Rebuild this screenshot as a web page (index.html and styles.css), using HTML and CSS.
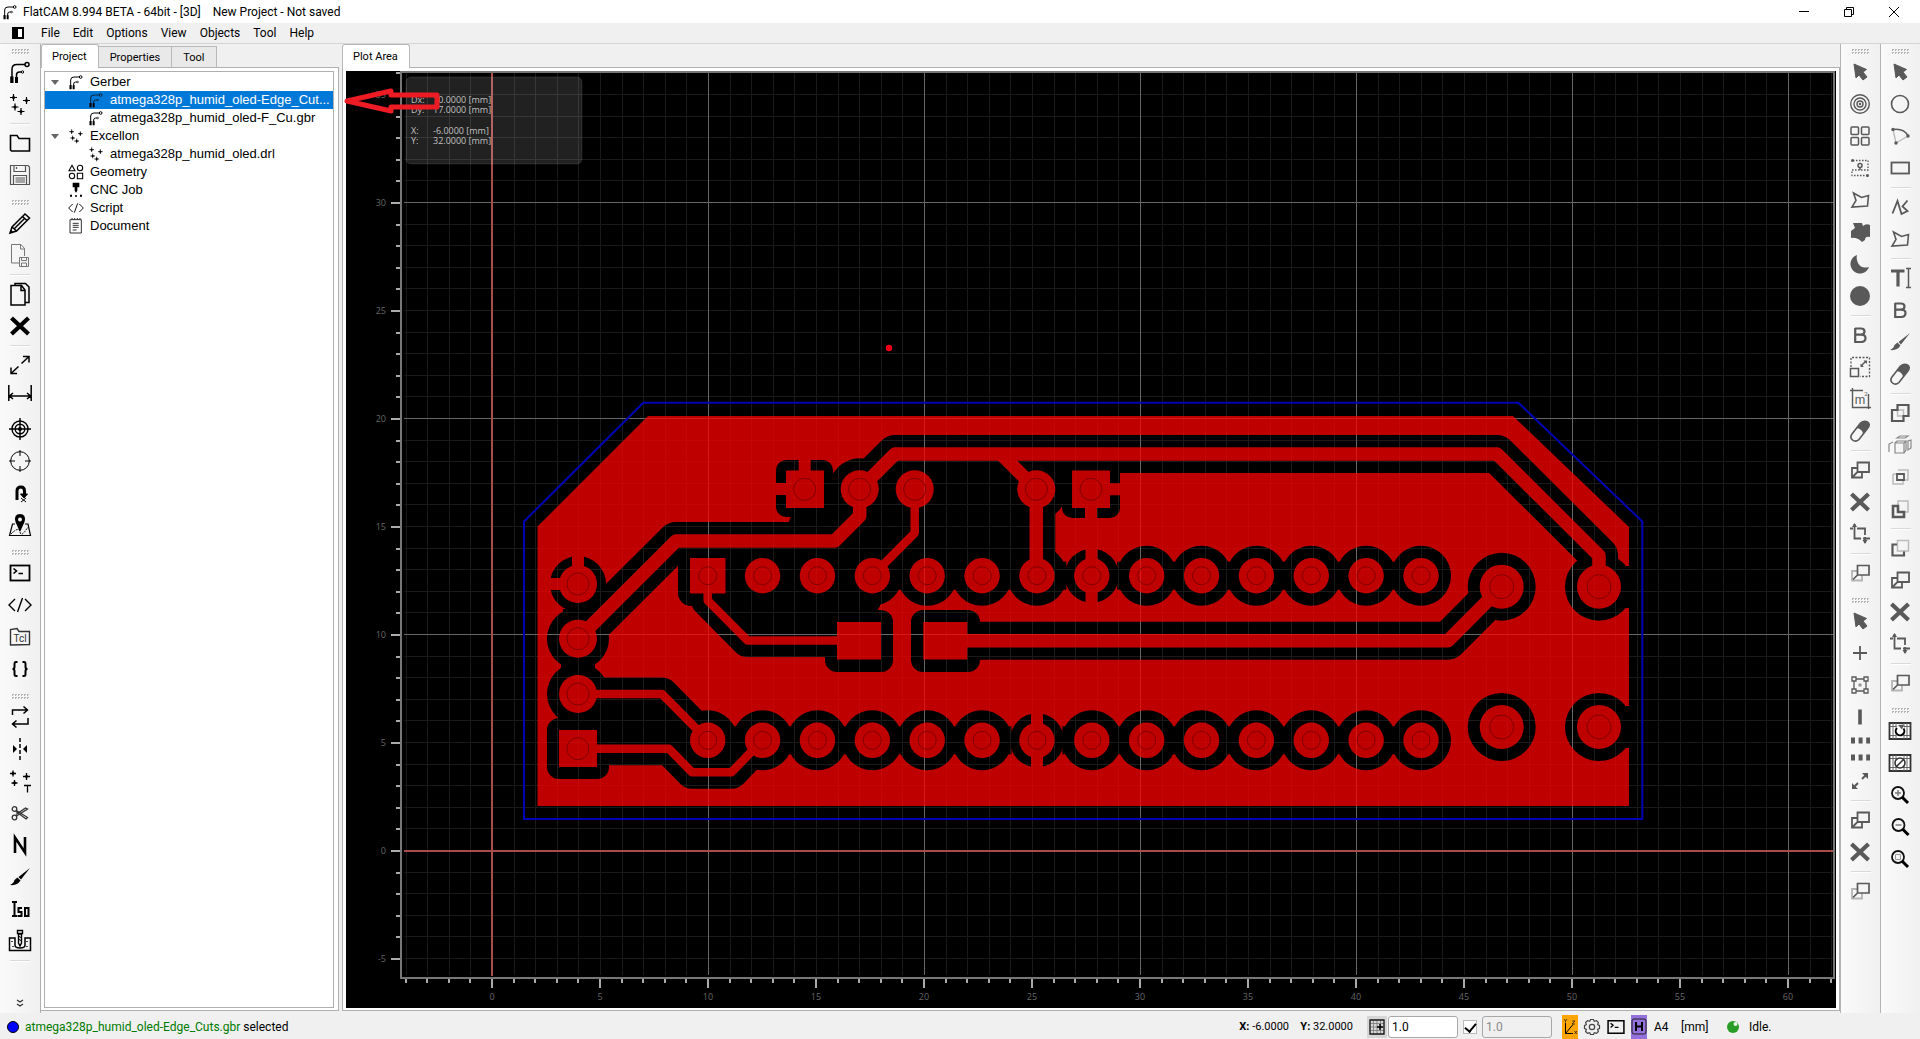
FILE: index.html
```html
<!DOCTYPE html>
<html lang="en">
<head>
<meta charset="utf-8">
<title>FlatCAM 8.994 BETA</title>
<link rel="stylesheet" href="styles.css">
</head>
<body>
<svg class="sprite" aria-hidden="true">
  <symbol id="route" viewBox="0 0 24 24"><path d="M4 17V9Q4 4.500 9 4.500H17M8.500 18V15Q8.500 12 11.500 12H13.500" fill="none" stroke="currentColor" stroke-width="1.500"/><path d="M2.200 16.500h3.300v6.500H2.200zM7 17h3v6H7z"/><circle cx="19" cy="4.500" r="2" fill="none" stroke="currentColor" stroke-width="1.500"/><circle cx="14.500" cy="12" r="1.200" fill="none" stroke="currentColor"/></symbol>
  <symbol id="drills" viewBox="0 0 24 24"><path d="M5.500 2v7M2 5.500h7M18.500 5v7M15 8.500h7M7 11.500v7M3.500 15h7M13 16v7M9.500 19.500h7" stroke="currentColor" stroke-width="1.200"/><g><circle cx="5.500" cy="5.500" r="1.500"/><circle cx="18.500" cy="8.500" r="1.500"/><circle cx="7" cy="15" r="1.500"/><circle cx="13" cy="19.500" r="1.500"/></g></symbol>
  <symbol id="folder" viewBox="0 0 24 24"><path d="M2.500 19V4.500H9l2 3H21.500V20H3.500z" fill="none" stroke="currentColor" stroke-width="1.600"/></symbol>
  <symbol id="save" viewBox="0 0 24 24"><path d="M2.500 2.500H20l1.500 1.500V21.500h-19zM6 2.500V8.500H17.500V2.500M5.500 21V12.500H18.500V21M7.500 15H17M7.500 17H17M7.500 19H17M8.500 4v2" fill="none" stroke="#555" stroke-width="1.200"/></symbol>
  <symbol id="pencil" viewBox="0 0 24 24"><path d="M2 22l2-6L17 3l4.500 4L8.500 20zM4 16l4.500 4M14.500 5.500l4.500 4M6.500 17.500L17 7" fill="none" stroke="currentColor" stroke-width="1.500"/><path d="M2 22l1.200-3 2 1.800z"/></symbol>
  <symbol id="filesave" viewBox="0 0 24 24"><path d="M11 20H3.500V1.500H13l3.500 4V13M12.500 1.500V6H17M11.500 14.500H20.500V23.500h-9zM13.500 14.500v3h5v-3M13.500 23v-3h5v3" fill="none" stroke="#777"/></symbol>
  <symbol id="copy" viewBox="0 0 24 24"><path d="M3 3.500H13.500L17 8V23H3zM13 4V8.500H17M7 3V1.500H17.500L21 5V20.500H17.500" fill="none" stroke="currentColor" stroke-width="1.500"/></symbol>
  <symbol id="cross" viewBox="0 0 24 24"><path d="M3.500 4L20.500 20M20.500 4L3.500 20" stroke="currentColor" stroke-width="4.200"/></symbol>
  <symbol id="expand" viewBox="0 0 24 24"><path d="M13.500 10.500L21 3.500M15 3.500H21V9.500M10.500 13.500L3 20.500M3 14.500V20.500H9" fill="none" stroke="currentColor" stroke-width="1.500"/></symbol>
  <symbol id="measure" viewBox="0 0 24 24"><path d="M.8 0V16M23.200 0V16M1 11H23M5 8L1.500 11 5 14M19 8l3.500 3-3.500 3" fill="none" stroke="currentColor" stroke-width="1.500"/></symbol>
  <symbol id="target" viewBox="0 0 24 24"><path d="M12 1V23M1 12H23" stroke="currentColor" stroke-width="1.400"/><g fill="none" stroke="currentColor" stroke-width="1.400"><circle cx="12" cy="12" r="8"/><circle cx="12" cy="12" r="4.800"/></g><circle cx="12" cy="12" r="2"/></symbol>
  <symbol id="crosshair" viewBox="0 0 24 24"><path d="M12 1V7M12 17V23M1 12H7M17 12H23" stroke="currentColor"/><circle cx="12" cy="12" r="9.300" fill="none" stroke="currentColor"/></symbol>
  <symbol id="hook" viewBox="0 0 24 24"><path d="M9 19V10Q9 6 13 6Q16.500 6 16.500 10V14" fill="none" stroke="currentColor" stroke-width="3"/><path d="M12.500 13h7l-3.500 4zM13 17l5 4M18 17l-5 4" stroke="currentColor"/></symbol>
  <symbol id="map" viewBox="0 0 24 24"><path d="M7 11H4.500L1.500 22.500H22.500L20 11H17" fill="none" stroke="currentColor" stroke-width="1.200"/><path d="M12 19L7.500 9Q5.500 1 12 1T16.500 9z"/><circle cx="12" cy="6.500" r="2" fill="#f5f5f5"/><path d="M3 21Q11 13 12 19T20 14" fill="none" stroke="currentColor" stroke-dasharray="2 1"/></symbol>
  <symbol id="shell" viewBox="0 0 24 24"><rect x="2.500" y="4.500" width="19" height="15" fill="none" stroke="currentColor" stroke-width="1.800"/><path d="M5.500 7.500l3 2.500-3 2.500M10.500 12.500H15" fill="none" stroke="currentColor" stroke-width="1.600"/></symbol>
  <symbol id="code" viewBox="0 0 24 24"><path d="M7 6L1 12l6 6M17 6l6 6-6 6M14.500 5L9.500 19" fill="none" stroke="currentColor" stroke-width="1.400"/></symbol>
  <symbol id="tcl" viewBox="0 0 24 24"><path d="M2.500 20V4.500L9 3.500l2 3H21.500V19.500z" fill="none" stroke="#333" stroke-width="1.400"/><text x="12" y="17" font-size="10" text-anchor="middle" fill="#333">Tcl</text></symbol>
  <symbol id="braces" viewBox="0 0 24 24"><path d="M9.500 5H8Q6.500 5 6.500 7V10Q6.500 12 4.500 12Q6.500 12 6.500 14V17Q6.500 19 8 19H9.500M14.500 5H16Q17.500 5 17.500 7V10Q17.500 12 19.500 12Q17.500 12 17.500 14V17Q17.500 19 16 19H14.500" fill="none" stroke="currentColor" stroke-width="2"/></symbol>
  <symbol id="loop" viewBox="0 0 24 24"><path d="M4.500 10V5H19M15.500 1.500L19.500 5 15.500 8.500M20 13V19H5M8.500 15.500L4.500 19l4 3.500" fill="none" stroke="currentColor" stroke-width="1.500"/></symbol>
  <symbol id="mirror" viewBox="0 0 24 24"><path d="M12 1V23" stroke="currentColor" stroke-width="1.500" stroke-dasharray="4 2"/><path d="M5 8v8l4-4zM19 8v8l-4-4z"/></symbol>
  <symbol id="drillsT" viewBox="0 0 24 24"><path d="M5 1.500v6M2 4.500h6M18.500 4v7M15 7.500h7M6.500 11v6M3.500 14h6M16 16.500H23M19.500 16.500V23.500" stroke="currentColor" stroke-width="1.300"/><circle cx="5" cy="4.500" r="1.400"/><circle cx="18.500" cy="7.500" r="1.400"/><circle cx="6.500" cy="14" r="1.400"/></symbol>
  <symbol id="scissors" viewBox="0 0 24 24"><g fill="none" stroke="#333" stroke-width="1.300"><circle cx="6.500" cy="8" r="2.300"/><circle cx="6.500" cy="16.500" r="2.300"/><path d="M8.500 9.500L19.500 16.500 18 18 8 10.500M8.500 15L19.500 8 17.500 7 8 13.500"/></g></symbol>
  <symbol id="ncc" viewBox="0 0 24 24"><path d="M7 20V4.500L17 19.500V4" fill="none" stroke="currentColor" stroke-width="2.600"/></symbol>
  <symbol id="brush" viewBox="0 0 24 24"><path d="M22 3L13 14.500l-2.500-2.500zM9.500 12.500l3 3Q9 21 2 20 6 18 6.500 15z" fill="currentColor"/></symbol>
  <symbol id="iso" viewBox="0 0 24 24"><path d="M4 5h5M6.500 5v14M4 19h5M14 11h-3.500v4h3v4h-4M17 11h3.500v8H17z" fill="none" stroke="currentColor" stroke-width="2"/></symbol>
  <symbol id="mill" viewBox="0 0 24 24"><path d="M7 9H1.500V21.500H22.500V9H17V16Q17 19 12 19T7 16z" fill="none" stroke="currentColor" stroke-width="1.500"/><path d="M9.500 1.500h5v3h-5zM10.500 5h3v9L12 17l-1.500-3zM4 12v1M19 12v1M5 17v1M19 17v1" fill="none" stroke="currentColor" stroke-width="1.400"/><path d="M10 7l4 2M10 10l4 2" stroke="currentColor"/></symbol>
  <symbol id="pointer" viewBox="0 0 24 24"><path d="M6 4l12.500 5.500-3.500 2.500 4 5-4 3-4-5-3 3z" fill="currentColor" stroke="currentColor"/></symbol>
  <symbol id="rings" viewBox="0 0 24 24"><g fill="none" stroke="currentColor" stroke-width="1.400"><circle cx="12" cy="12" r="9.300"/><circle cx="12" cy="12" r="6"/><circle cx="12" cy="12" r="3"/></g><circle cx="12" cy="12" r="1.200"/></symbol>
  <symbol id="array" viewBox="0 0 24 24"><g fill="none" stroke="currentColor" stroke-width="1.500"><rect x="3" y="3" width="7.500" height="7.500" rx="1"/><rect x="13.500" y="3" width="7.500" height="7.500" rx="1"/><rect x="3" y="13.500" width="7.500" height="7.500" rx="1"/><rect x="13.500" y="13.500" width="7.500" height="7.500" rx="1"/></g></symbol>
  <symbol id="track" viewBox="0 0 24 24"><path d="M5 4.500H20V14H4V19.500H19" fill="none" stroke="currentColor" stroke-dasharray="1.500 1.500" stroke-width="1.300"/><circle cx="4.500" cy="4.500" r="1.500"/><circle cx="19.500" cy="19.500" r="1.500"/><circle cx="12" cy="9.500" r="2" fill="none" stroke="currentColor" stroke-width="1.500"/><path d="M12 11v3" stroke="currentColor" stroke-width="1.500"/></symbol>
  <symbol id="poly" viewBox="0 0 24 24"><path d="M5.500 5L13.500 9.500 20.500 7.500 19.500 18 4 19 8 12.500z" fill="none" stroke="currentColor" stroke-width="1.600"/></symbol>
  <symbol id="blob" viewBox="0 0 24 24"><path d="M5 3H14L15 6Q18 3 22 5V17Q17 16 17 20L14 22Q9 17 3 18V11L7 8z" fill="currentColor"/></symbol>
  <symbol id="moon" viewBox="0 0 24 24"><path d="M9 3A9.500 9.500 0 1 0 21 15Q13 17 10 11 8 7 9 3z" fill="currentColor"/></symbol>
  <symbol id="disc" viewBox="0 0 24 24"><circle cx="12" cy="12" r="10" fill="currentColor"/></symbol>
  <symbol id="buffer" viewBox="0 0 24 24"><path d="M7 5.500H13Q16.500 5.500 16.500 8.500T13 11.700H7.500M13 11.700Q17.500 11.700 17.500 15.200T13 19H7.200V5" fill="none" stroke="currentColor" stroke-width="2.200"/></symbol>
  <symbol id="scale" viewBox="0 0 24 24"><path d="M3 12V2.500H21.500V21.500H12" fill="none" stroke="currentColor" stroke-dasharray="2 1.500" stroke-width="1.300"/><path d="M2.500 13.500h8v8h-8zM13.500 10.500l4-4" fill="none" stroke="currentColor" stroke-width="1.500"/><path d="M15.500 5.500H19V9zM12.500 8.500V12H16z"/></symbol>
  <symbol id="area" viewBox="0 0 24 24"><path d="M4.500 1V20.500H23M2 3.500H15M20.500 7V22" fill="none" stroke="currentColor" stroke-width="1.400"/><text x="12" y="17" font-size="12" text-anchor="middle" fill="currentColor">m</text><text x="18" y="9" font-size="6" text-anchor="middle" fill="currentColor">2</text></symbol>
  <symbol id="eraser" viewBox="0 0 24 24"><path d="M4 15L12.500 4Q16 1 19.500 3T19.500 9.500L11 20.500Q7.500 23.500 4.500 21T4 15z" fill="none" stroke="currentColor" stroke-width="1.600"/><path d="M8.500 9L12.500 4Q16 1 19.500 3T19.500 9.500L15 15.500Q15 10 8.500 9z" fill="currentColor"/></symbol>
  <symbol id="dup" viewBox="0 0 24 24"><path d="M9.500 4.500h11.500v9.500H9.500zM9.500 10H4v9.500H14V14M5 18.500l4-4" fill="none" stroke="currentColor" stroke-width="1.800"/></symbol>
  <symbol id="move" viewBox="0 0 24 24"><path d="M9.500 10H4v9.500H14V14" fill="none" stroke="#b5b5b5" stroke-width="1.800"/><path d="M9.500 4.500h11.500v9.500H9.500zM5 18.500l5-5" fill="none" stroke="currentColor" stroke-width="1.700"/></symbol>
  <symbol id="crop" viewBox="0 0 24 24"><path d="M6.500 2V16.500H13M2 6.500H5M9 6.500H17V13M15 16.500H22M17 15V21" fill="none" stroke="currentColor" stroke-width="1.800"/><path d="M4 5l2.500-4L9 5zM14.500 18h5L17 22z"/></symbol>
  <symbol id="plus" viewBox="0 0 24 24"><path d="M12 5V19M5 12H19" stroke="currentColor" stroke-width="1.800"/></symbol>
  <symbol id="nodes" viewBox="0 0 24 24"><g fill="none" stroke="currentColor" stroke-width="1.300"><path d="M4 4h4v4H4zM16 4h4v4h-4zM4 16h4v4H4zM16 16h4v4h-4zM8 6h8M8 18h8M6 8v8M18 8v8"/></g><circle cx="12" cy="12" r="1.800" fill="#999"/></symbol>
  <symbol id="bar" viewBox="0 0 24 24"><path d="M12 4.500V19.500" stroke="currentColor" stroke-width="3.600"/></symbol>
  <symbol id="dashes" viewBox="0 0 24 24"><path d="M3 3.500H22M3 20.500H22" stroke="currentColor" stroke-width="6" stroke-dasharray="4 3.600"/></symbol>
  <symbol id="spread" viewBox="0 0 24 24"><path d="M14 10l5-5M10 14l-5 5" stroke="currentColor" stroke-width="2"/><path d="M14 4h6v6zM4 14v6h6z" fill="currentColor"/></symbol>
  <symbol id="ring" viewBox="0 0 24 24"><circle cx="12" cy="12" r="8.500" fill="none" stroke="currentColor" stroke-width="1.600"/></symbol>
  <symbol id="arc" viewBox="0 0 24 24"><path d="M5 5.500L8 19 20 12" fill="none" stroke="#bbb" stroke-width="1.400"/><path d="M5 5.500Q16 4 20 12" fill="none" stroke="currentColor" stroke-width="1.500"/><circle cx="5" cy="5.500" r="1.700"/><circle cx="20" cy="12" r="1.700"/><circle cx="8" cy="19" r="1.700"/></symbol>
  <symbol id="box" viewBox="0 0 24 24"><rect x="3.500" y="6.500" width="17.500" height="11" fill="none" stroke="currentColor" stroke-width="1.800"/></symbol>
  <symbol id="path" viewBox="0 0 24 24"><path d="M4.500 18.500L9.500 6 13.500 19 19.500 16 14.500 11.500 19.500 5.500" fill="none" stroke="currentColor" stroke-width="1.800"/></symbol>
  <symbol id="text" viewBox="0 0 24 24"><path d="M3 5H16.500M10 4V20.500" fill="none" stroke="currentColor" stroke-width="3.200"/><path d="M18 2.500h5M20.500 3V21M18 21.500h5" stroke="currentColor" stroke-width="1.500"/></symbol>
  <symbol id="union" viewBox="0 0 24 24"><path d="M9.500 9h6v6h-6z" fill="none" stroke="#bbb" stroke-width="1.400"/><path d="M9.500 4H20.500V15H15.500V20H4V9H9.500z" fill="none" stroke="currentColor" stroke-width="2.200"/></symbol>
  <symbol id="cubes" viewBox="0 0 24 24"><g fill="none" stroke="#888" stroke-width="1.200"><path d="M7 10h9v10H7zM7 10l2-2h9l-2 2M18 8v9l-2 3M9 5l3-2h8l-3 2zM1 19V11l4-2M23 7l-3 1v9l3-2z"/></g></symbol>
  <symbol id="inter" viewBox="0 0 24 24"><path d="M10 5h10v10h-5M5 9h5M5 9v10h10v-4" fill="none" stroke="#bbb" stroke-width="1.500"/><path d="M9 9h7v6H9z" fill="none" stroke="currentColor" stroke-width="1.800"/></symbol>
  <symbol id="cutaway" viewBox="0 0 24 24"><path d="M10 8V4h10v11h-4" fill="none" stroke="#bbb" stroke-width="1.500"/><path d="M5 9h5v6h6v5H5z" fill="none" stroke="currentColor" stroke-width="2.600"/></symbol>
  <symbol id="subtract" viewBox="0 0 24 24"><path d="M9.500 4.500h11V15h-11z" fill="none" stroke="#bbb" stroke-width="1.500"/><path d="M9 8.500H4.500V19.500H16V15.500" fill="none" stroke="currentColor" stroke-width="2.200"/></symbol>
  <symbol id="replot" viewBox="0 0 24 24"><path d="M1.500 4h21v16h-21z" fill="#fff" stroke="#333" stroke-width="1.800"/><path d="M5 4v16M8 4v16M16 4v16M19 4v16M2 7.500h20M2 16.500h20" stroke="#666"/><circle cx="12" cy="12" r="5.500" fill="#fff"/><path d="M9 9A4.300 4.300 0 1 0 15.500 9.500" fill="none" stroke="#000" stroke-width="2"/><path d="M10 6l6-.5-2 5z"/></symbol>
  <symbol id="clear" viewBox="0 0 24 24"><path d="M1.500 4h21v16h-21z" fill="#fff" stroke="#333" stroke-width="1.800"/><path d="M5 4v16M8 4v16M16 4v16M19 4v16M2 7.500h20M2 16.500h20" stroke="#666"/><circle cx="12" cy="12" r="5" fill="#fff" stroke="#333" stroke-width="1.600"/><path d="M8.500 15.500l7-7" stroke="#333" stroke-width="1.500"/></symbol>
  <symbol id="zin" viewBox="0 0 24 24"><circle cx="10" cy="10" r="6" fill="none" stroke="#111" stroke-width="1.800"/><path d="M14 14l6 6" stroke="#000" stroke-width="3"/><path d="M7 10h6M10 7v6" stroke="#777" stroke-width="1.400"/></symbol>
  <symbol id="zout" viewBox="0 0 24 24"><circle cx="10.500" cy="10" r="6" fill="none" stroke="#111" stroke-width="1.800"/><path d="M14.500 14l6 6" stroke="#000" stroke-width="3"/><path d="M7.500 10h6" stroke="#777" stroke-width="1.400"/></symbol>
  <symbol id="zfit" viewBox="0 0 24 24"><circle cx="10" cy="10" r="6" fill="none" stroke="#111" stroke-width="1.800"/><path d="M14 14l6 6" stroke="#000" stroke-width="3"/><path d="M7.500 7.500h5v5h-5z" fill="none" stroke="#999"/></symbol>
  <symbol id="shapes" viewBox="0 0 24 24"><g fill="none" stroke="currentColor" stroke-width="1.600"><path d="M6 2l4.500 8h-9zM14 14h8v8h-8z"/><circle cx="18" cy="6" r="4"/><circle cx="6" cy="18" r="4"/></g></symbol>
  <symbol id="cnc" viewBox="0 0 24 24"><path d="M7 1h10v7h-3v5l-2 3-2-3V8H7zM3 19h3v3H3zM10.500 20h3v2h-3zM18 19h3v3h-3z"/></symbol>
  <symbol id="doc" viewBox="0 0 24 24"><path d="M3 2.500h17v20H3zM7 8h9M7 11h9M7 14h9M7 18h6M6 0v3M10 0v3M14 0v3M18 0v3" fill="none" stroke="#333" stroke-width="1.500"/></symbol>
  <symbol id="gear" viewBox="0 0 24 24"><circle cx="12" cy="12" r="3.600" fill="none" stroke="#444" stroke-width="1.600"/><path d="M10 2h4l1 2.500 3-1 2.500 2.500-1 3L22 10v4l-2.500 1 1 3-2.500 2.500-3-1L14 22h-4l-1-2.500-3 1L3.500 18l1-3L2 14v-4l2.500-1-1-3L6 3.500l3 1z" fill="none" stroke="#444" stroke-width="1.600"/></symbol>
</svg>

<div class="window">
  <header class="titlebar">
    <svg class="icon16"><use href="#route"/></svg>
    <h1 class="title">FlatCAM 8.994 BETA - 64bit - [3D] &nbsp;&nbsp; New Project - Not saved</h1>
    <div class="controls">
      <button aria-label="Minimize"><svg width="12" height="12"><path d="M1 5.500H11" stroke="#000"/></svg></button>
      <button aria-label="Restore"><svg width="12" height="12"><path d="M1.500 3.500h7v7h-7zM3.500 3V1.500h7v7H9" fill="none" stroke="#000"/></svg></button>
      <button aria-label="Close"><svg width="12" height="12"><path d="M1 1l10 10M11 1L1 11" stroke="#000"/></svg></button>
    </div>
  </header>

  <nav class="menubar">
    <button class="toggle" aria-label="Toggle panels"><svg width="12" height="12"><path d="M1 1h10v10H1z" fill="#fff" stroke="#000" stroke-width="2"/><path d="M1 1h5v10H1z"/></svg></button>
    <button>File</button><button>Edit</button><button>Options</button><button>View</button><button>Objects</button><button>Tool</button><button>Help</button>
  </nav>

  <main class="main">
    <div class="toolbar toolbar-main">
      <div class="group"><i class="handle"></i>
        <button aria-label="Open Gerber"><svg><use href="#route"/></svg></button>
        <button aria-label="Open Excellon"><svg><use href="#drills"/></svg></button><hr>
        <button aria-label="Open project"><svg><use href="#folder"/></svg></button>
        <button aria-label="Save project"><svg><use href="#save"/></svg></button></div>
      <div class="group"><i class="handle"></i>
        <button aria-label="Editor"><svg><use href="#pencil"/></svg></button>
        <button aria-label="Save object"><svg><use href="#filesave"/></svg></button><hr>
        <button aria-label="Copy"><svg><use href="#copy"/></svg></button>
        <button aria-label="Delete"><svg><use href="#cross"/></svg></button><hr>
        <button aria-label="Distance"><svg><use href="#expand"/></svg></button>
        <button aria-label="Minimum distance"><svg><use href="#measure"/></svg></button>
        <button aria-label="Set origin"><svg><use href="#target"/></svg></button>
        <button aria-label="Move to origin"><svg><use href="#crosshair"/></svg></button>
        <button aria-label="Jump to"><svg><use href="#hook"/></svg></button>
        <button aria-label="Locate"><svg><use href="#map"/></svg></button></div>
      <div class="group"><i class="handle"></i>
        <button aria-label="Shell"><svg><use href="#shell"/></svg></button>
        <button aria-label="New script"><svg><use href="#code"/></svg></button>
        <button aria-label="Open script"><svg><use href="#tcl"/></svg></button>
        <button aria-label="Run script"><svg><use href="#braces"/></svg></button></div>
      <div class="group"><i class="handle"></i>
        <button aria-label="Two-sided"><svg><use href="#loop"/></svg></button>
        <button aria-label="Align"><svg><use href="#mirror"/></svg></button>
        <button aria-label="Extract drills"><svg><use href="#drillsT"/></svg></button>
        <button aria-label="Cutout"><svg><use href="#scissors"/></svg></button>
        <button aria-label="Copper clear"><svg><use href="#ncc"/></svg></button>
        <button aria-label="Paint"><svg><use href="#brush"/></svg></button>
        <button aria-label="Isolation"><svg><use href="#iso"/></svg></button>
        <button aria-label="Drilling"><svg><use href="#mill"/></svg></button><hr></div>
      <button class="more" aria-label="More tools"><svg><path d="M9 8l3 2 3-2M9 12l3 2 3-2" fill="none" stroke="#333" stroke-width="1.300"/></svg></button>
    </div>

    <section class="side">
      <div class="tabs"><button class="tab active">Project</button><button class="tab">Properties</button><button class="tab">Tool</button></div>
      <div class="pane">
        <ul class="tree">
          <li><i class="caret"></i><svg class="icon16"><use href="#route"/></svg><span>Gerber</span></li>
          <li class="child selected"><svg class="icon16"><use href="#route"/></svg><span>atmega328p_humid_oled-Edge_Cut...</span></li>
          <li class="child"><svg class="icon16"><use href="#route"/></svg><span>atmega328p_humid_oled-F_Cu.gbr</span></li>
          <li><i class="caret"></i><svg class="icon16"><use href="#drills"/></svg><span>Excellon</span></li>
          <li class="child"><svg class="icon16"><use href="#drills"/></svg><span>atmega328p_humid_oled.drl</span></li>
          <li><svg class="icon16"><use href="#shapes"/></svg><span>Geometry</span></li>
          <li><svg class="icon16"><use href="#cnc"/></svg><span>CNC Job</span></li>
          <li><svg class="icon16"><use href="#code"/></svg><span>Script</span></li>
          <li><svg class="icon16"><use href="#doc"/></svg><span>Document</span></li>
        </ul>
      </div>
    </section>

    <section class="plot">
      <div class="tabs"><button class="tab active">Plot Area</button></div>
      <div class="pane">
        <svg class="canvas" id="canvas">
          <g id="grid"></g>
          <rect class="hud" x="60" y="6" width="176" height="87" rx="5"/>
          <g class="hud-text">
            <text x="65" y="32">Dx:</text><text x="87" y="32">10.0000 [mm]</text>
            <text x="65" y="42">Dy:</text><text x="87" y="42">17.0000 [mm]</text>
            <text x="65" y="63">X:</text><text x="87" y="63">-6.0000 [mm]</text>
            <text x="65" y="73">Y:</text><text x="87" y="73">32.0000 [mm]</text>
          </g>
          <defs>
            <g id="wide"><path d="M578 638.700L676 541H834.700L859.700 516V489.300L895 454H1497L1599 555.500V586.700M1001 454L1036.300 489.300V575.700M945 640.700H1448L1501.700 586.700"/></g>
            <g id="narrow"><path d="M914.700 489.300V533L872.300 575.700M707.700 575.700V600.500L747.500 640.600H859M578 694H662L707.700 740.300M578 748.700H669L692 772.300H731.500L762.300 740.300"/></g>
            <mask id="copper" maskUnits="userSpaceOnUse" x="500" y="380" width="1200" height="460">
              <path d="M537.500 526.500L648 416H1513L1629 527V806H537.500z" fill="#fff"/>
              <g fill="none" stroke="#000" stroke-linejoin="round" stroke-linecap="round">
                <use href="#wide" stroke-width="38"/><use href="#narrow" stroke-width="33"/>
              </g>
              <path d="M684 566L700 541H834L862 485L895 454H1036V576H684zM690 576H880V606L860 640H747zM1036 454H1091V489H1036zM804 480H860V530H786zM590 694H662L707 740H762L731 772H692L669 748H590zM1623 566H1632V608H1623zM1623 706H1632V748H1623zM561 664H595V669H561zM563 609H580V613H563z"/>
              <rect x="547" y="718" width="62" height="61" rx="12"/><rect x="776" y="460" width="57" height="57" rx="10"/><rect x="1062" y="461" width="58" height="57" rx="10"/><rect x="678" y="546" width="60" height="60" rx="13"/>
              <rect x="825" y="610" width="68" height="62" rx="12"/><rect x="911" y="610" width="69" height="62" rx="12"/>
              <g id="gaps"></g>
              <g fill="none" stroke="#fff" stroke-linejoin="round"><use href="#wide" stroke-width="13.500"/><use href="#narrow" stroke-width="8.500"/></g>
              <path d="M559 730h38v37h-38zM786 470.500h38v37.500h-38zM1072 470.500h38v37.500h-38zM690 558h35.500v35.500H690zM837 622h44v37.500h-44zM923.300 622h44v37.500h-44z" fill="#fff"/>
              <path d="M804.700 455V489H774M1091 489.300H1124M1091 489V522M1091.500 545V606M1037 709V771M578 554V584H548" fill="none" stroke="#fff" stroke-width="12"/>
              <g id="pads" fill="#fff"></g>
            </mask>
          </defs>
          <g id="board" transform="translate(-346 -71)">
            <rect x="500" y="380" width="1200" height="460" fill="#f00" opacity=".75" mask="url(#copper)"/>
            <g id="holes"></g>
            <path class="edge" d="M524 521.500L643.300 402.700H1518.300L1642.300 521.500V819H524z"/>
            <circle cx="889" cy="348" r="3.200" fill="#f00018"/>
          </g>
          <path class="arrow" d="M1 30L45 20V24H91V36H45V40z"/>
        </svg>
      </div>
    </section>

    <div class="toolbar toolbar-edit">
      <div class="group"><i class="handle"></i>
        <button aria-label="Select"><svg><use href="#pointer"/></svg></button>
        <button aria-label="Pad"><svg><use href="#rings"/></svg></button>
        <button aria-label="Pad array"><svg><use href="#array"/></svg></button>
        <button aria-label="Track"><svg><use href="#track"/></svg></button>
        <button aria-label="Region"><svg><use href="#poly"/></svg></button>
        <button aria-label="Poligonize"><svg><use href="#blob"/></svg></button>
        <button aria-label="Semidisc"><svg><use href="#moon"/></svg></button>
        <button aria-label="Disc"><svg><use href="#disc"/></svg></button><hr>
        <button aria-label="Buffer"><svg><use href="#buffer"/></svg></button>
        <button aria-label="Scale"><svg><use href="#scale"/></svg></button>
        <button aria-label="Mark area"><svg><use href="#area"/></svg></button>
        <button aria-label="Eraser"><svg><use href="#eraser"/></svg></button><hr>
        <button aria-label="Copy shape"><svg><use href="#dup"/></svg></button>
        <button aria-label="Delete shape"><svg><use href="#cross"/></svg></button>
        <button aria-label="Transform"><svg><use href="#crop"/></svg></button><hr>
        <button aria-label="Move shape"><svg><use href="#move"/></svg></button></div>
      <div class="group"><i class="handle"></i>
        <button aria-label="Select drill"><svg><use href="#pointer"/></svg></button>
        <button aria-label="Add drill"><svg><use href="#plus"/></svg></button>
        <button aria-label="Drill array"><svg><use href="#nodes"/></svg></button>
        <button aria-label="Add slot"><svg><use href="#bar"/></svg></button>
        <button aria-label="Slot array"><svg><use href="#dashes"/></svg></button>
        <button aria-label="Resize"><svg><use href="#spread"/></svg></button><hr>
        <button aria-label="Copy drill"><svg><use href="#dup"/></svg></button>
        <button aria-label="Delete drill"><svg><use href="#cross"/></svg></button><hr>
        <button aria-label="Move drill"><svg><use href="#move"/></svg></button></div>
    </div>

    <div class="toolbar toolbar-edit">
      <div class="group"><i class="handle"></i>
        <button aria-label="Select geometry"><svg><use href="#pointer"/></svg></button>
        <button aria-label="Circle"><svg><use href="#ring"/></svg></button>
        <button aria-label="Arc"><svg><use href="#arc"/></svg></button>
        <button aria-label="Rectangle"><svg><use href="#box"/></svg></button><hr>
        <button aria-label="Path"><svg><use href="#path"/></svg></button>
        <button aria-label="Polygon"><svg><use href="#poly"/></svg></button><hr>
        <button aria-label="Text"><svg><use href="#text"/></svg></button>
        <button aria-label="Buffer geometry"><svg><use href="#buffer"/></svg></button>
        <button aria-label="Paint shape"><svg><use href="#brush"/></svg></button>
        <button aria-label="Erase"><svg><use href="#eraser"/></svg></button><hr>
        <button aria-label="Union"><svg><use href="#union"/></svg></button>
        <button aria-label="Explode"><svg><use href="#cubes"/></svg></button>
        <button aria-label="Intersection"><svg><use href="#inter"/></svg></button>
        <button aria-label="Subtraction"><svg><use href="#cutaway"/></svg></button><hr>
        <button aria-label="Cut path"><svg><use href="#subtract"/></svg></button>
        <button aria-label="Copy geometry"><svg><use href="#dup"/></svg></button>
        <button aria-label="Delete geometry"><svg><use href="#cross"/></svg></button>
        <button aria-label="Transformations"><svg><use href="#crop"/></svg></button><hr>
        <button aria-label="Move geometry"><svg><use href="#move"/></svg></button></div>
      <div class="group"><i class="handle"></i>
        <button aria-label="Replot"><svg><use href="#replot"/></svg></button>
        <button aria-label="Clear plot"><svg><use href="#clear"/></svg></button>
        <button aria-label="Zoom in"><svg><use href="#zin"/></svg></button>
        <button aria-label="Zoom out"><svg><use href="#zout"/></svg></button>
        <button aria-label="Zoom fit"><svg><use href="#zfit"/></svg></button></div>
    </div>
  </main>

  <footer class="status">
    <i class="led"></i>
    <p class="message"><span class="file">atmega328p_humid_oled-Edge_Cuts.gbr</span> selected</p>
    <p class="coord"><b>X:</b> -6.0000</p>
    <p class="coord"><b>Y:</b> 32.0000</p>
    <button class="snap" aria-label="Snap to grid"><svg width="16" height="16"><path d="M1 1h14v14H1zM4.500 1v14M8 1v14M11.500 1v14M1 4.500h14M1 8h14M1 11.500h14" fill="none" stroke="#777" stroke-width=".8"/><path d="M1 1h14v14H1z" fill="none" stroke="#222" stroke-width="1.300"/><path d="M11 5v6M8 8h6" stroke="#000" stroke-width="1.500"/></svg></button>
    <input class="field" aria-label="Grid X" value="1.0">
    <input class="check" type="checkbox" aria-label="Link grid" checked>
    <input class="field" aria-label="Grid Y" value="1.0" disabled>
    <button class="axis" aria-label="Toggle axis"><svg width="16" height="24"><path d="M3.500 8V18.500H11M3.500 18.500L11 9.500" fill="none" stroke="#000"/><path d="M2 4l1.500 2L5 4M3.500 6v1.500M10 6h3l-3 3h3M12.500 16l2.500 3M15 16l-2.500 3" fill="none" stroke="#222" stroke-width=".8"/></svg></button>
    <button class="flat" aria-label="Preferences"><svg width="18" height="18"><use href="#gear"/></svg></button>
    <button class="flat" aria-label="Command line"><svg width="20" height="20"><use href="#shell"/></svg></button>
    <button class="hudbtn" aria-label="Toggle HUD"><svg width="16" height="24"><rect x="1" y="4" width="14" height="15" rx="2" fill="none" stroke="#222"/><path d="M5 7v9M11 7v9M5 11.500h6" stroke="#000" stroke-width="2"/></svg></button>
    <span class="paper">A4</span><span class="units">[mm]</span>
    <svg class="ball" width="14" height="14"><circle cx="7" cy="7" r="6" fill="#2a9d27"/><circle cx="9.500" cy="4" r="2" fill="#e5f5e5"/></svg>
    <span class="idle">Idle.</span>
  </footer>
</div>
<script src="plot.js"></script>
</body>
</html>
```
FILE: styles.css
```css
* { box-sizing: border-box; }
body { margin: 0; font: 12px/16px Roboto, "Open Sans", sans-serif; color: #000; background: #f0f0f0; }
button { font: inherit; color: inherit; background: none; border: 0; padding: 0; }
p, h1, ul { margin: 0; padding: 0; }
.sprite { display: none; }
.window { display: flex; flex-direction: column; height: 100vh; }
.icon16 { width: 16px; height: 16px; flex: none; }

.titlebar { display: flex; align-items: center; height: 23px; padding-left: 2px; background: #fff; }
.title { flex: 1; margin-left: 5px; font-size: 12px; font-weight: 400; }
.controls { display: flex; padding-right: 4px; }
.controls button { width: 45px; height: 23px; }
.controls svg { display: block; margin: 0 auto; }

.menubar { display: flex; align-items: center; gap: 13px; height: 21px; padding-left: 12px; border-bottom: 1px solid #d4d4d4; }
.menubar svg { display: block; }
.toggle { margin-right: 4px; }

.main { display: flex; flex: 1; min-height: 0; }
.toolbar { flex: none; display: flex; flex-direction: column; background: linear-gradient(to right, #fafafa, #f0f0f0); }
.toolbar-main { width: 41px; border-right: 1px solid #b0b0b0; overflow: hidden; }
.toolbar-edit { width: 40px; border-left: 1px solid #b4b4b4; color: #595959; fill: #595959; }
.group { display: flex; flex-direction: column; margin-bottom: 4px; }
.toolbar button { display: flex; align-items: center; justify-content: center; width: 40px; height: 32px; }
.toolbar .group button { flex: none; }
.toolbar-edit button { width: 38px; }
.toolbar button svg { width: 24px; height: 24px; }
.toolbar hr { width: 20px; height: 2px; margin: 3px auto 2px; border: 0; background: #d9d9d9; border-bottom: 1px solid #fff; }
.handle { width: 17px; height: 6px; margin: 4px auto 2px; background: conic-gradient(#b4b4b4 25%, transparent 0) -1px 1px / 3px 3px; }
.toolbar .more { margin-top: auto; height: 18px; }

.tabs { display: flex; align-items: flex-end; height: 23px; }
.tab { height: 21px; padding: 1px 11px 0; font-size: 11px; border: 1px solid #b9b9b9; border-bottom: 0; border-left-width: 0; background: #e9e9e9; }
.tab.active { height: 24px; padding: 0 11px 0 10px; border-left-width: 1px; border-radius: 3px 3px 0 0; background: #fff; position: relative; z-index: 1; margin-bottom: -1px; }
.side { flex: none; display: flex; flex-direction: column; width: 298px; padding-bottom: 2px; }
.pane { flex: 1; min-height: 0; border: 1px solid #b0b0b0; background: #fff; padding: 3px; }
.tree { height: 100%; padding-top: 1px; border: 1px solid #b0b0b0; list-style: none; font: 13px/18px "Liberation Sans", Arial, sans-serif; }
.side .pane { border-left: 0; padding: 3px 4px 2px 3px; }
.tree li { display: flex; align-items: center; height: 18px; padding-left: 23px; white-space: nowrap; position: relative; }
.tree li.child { padding-left: 43px; }
.tree li span { margin-left: 6px; }
.tree .selected { background: #0078d7; color: #fff; }
.tree .selected svg { color: #123; }
.caret { position: absolute; left: 6px; top: 7px; border: 4px solid transparent; border-top: 5px solid #666; border-bottom: 0; }

.plot { flex: 1; min-width: 0; display: flex; flex-direction: column; padding: 0 0 2px 3px; }
.plot .pane { padding: 3px 3px 2px; }
.canvas { display: block; width: 100%; height: 100%; background: #000; overflow: visible; }
.hud { fill: #fff; fill-opacity: .13; stroke: #fff; stroke-opacity: .1; }
.hud-text { font: 9px "Open Sans", sans-serif; fill: #c0c0c0; }
.minor { stroke: #1a1a1a; fill: none; }
.major { stroke: #666; fill: none; }
.frame { stroke: #777; stroke-width: 2; fill: none; }
.origin { stroke: #a84c4c; stroke-width: 2; fill: none; }
.ticks { stroke: #aaa; stroke-width: 2; fill: none; }
.label { font: 9px "Open Sans", sans-serif; fill: #666; }
.hole { fill: none; stroke: #800000; stroke-width: 1; }
.edge { fill: none; stroke: #0000b4; stroke-width: 2; }
.arrow { fill: none; stroke: #ed1c24; stroke-width: 5; stroke-linejoin: round; }

.status { display: flex; align-items: center; height: 26px; padding: 2px 0 0 7px; }
.led { width: 12px; height: 12px; border: 1px solid #000; border-radius: 50%; background: #00f; }
.message { flex: 1; margin-left: 6px; }
.file { color: #007a00; }
.coord { min-width: 52px; margin-right: 9px; font-size: 11px; }
.snap { display: flex; align-items: center; justify-content: center; width: 20px; height: 22px; margin: 0 1px 0 5px; background: #d6d6d6; }
.field { width: 70px; height: 22px; padding: 0 3px; font: inherit; border: 1px solid #a8a8a8; border-radius: 3px; background: #fff; }
.field:disabled { color: #888; background: #f0f0f0; }
.check { appearance: none; width: 14px; height: 14px; margin: 0 5px; border: 1px solid #bbb; background: #fff; display: grid; place-items: center; }
.check:checked::before { content: ""; width: 5px; height: 9px; margin-bottom: 2px; border: solid #000; border-width: 0 2px 2px 0; transform: rotate(40deg); }
.axis, .hudbtn { width: 16px; height: 24px; margin-left: 10px; background: #ffa500; }
.hudbtn { margin-left: 5px; background: #9370db; }
.status svg { display: block; }
.flat { margin-left: 5px; }
.paper { width: 27px; margin-left: 7px; }
.units { width: 45px; }
.idle { width: 171px; margin-left: 9px; }
```
FILE: plot.js
```js
const NS = "http://www.w3.org/2000/svg";
const el = (parent, name, attrs, text) => {
  const node = document.createElementNS(NS, name);
  for (const key in attrs) node.setAttribute(key, attrs[key]);
  if (text !== undefined) node.textContent = text;
  parent.appendChild(node);
};
const byId = id => document.getElementById(id);

// Round pads: [x, y, pad radius, hole radius, clearance radius]
const pads = [
  [578, 584, 19, 11, 28], [578, 638.7, 19, 11, 31], [578, 694, 19, 11, 31],
  [859.7, 489.3, 19, 11, 31], [914.7, 489.3, 19, 11, 31], [1036.3, 489.3, 19, 11, 31],
  [1501.7, 586.7, 22, 12, 34], [1599, 586.7, 22, 12, 34],
  [1501.7, 727, 22, 12, 34], [1599, 727, 22, 12, 34]
];
const PITCH = 54.87;
for (let i = 0; i < 14; i++) {
  const x = 707.7 + i * PITCH;
  if (i > 0) pads.push([x, 575.7, 17.7, 9, i === 7 ? 27 : 30]);
  pads.push([x, 740.3, 17.7, 9, i === 6 ? 27 : 30]);
  // Blunt the copper tips left between neighbouring clearances
  if (i < 13) for (const y of [575.7, 740.3])
    el(byId("gaps"), "rect", { x: x + PITCH / 2 - 2, y: y - 14, width: 4, height: 28 });
}
for (const [cx, cy, r, hole, gap] of pads) {
  el(byId("gaps"), "circle", { cx, cy, r: gap });
  el(byId("pads"), "circle", { cx, cy, r });
  el(byId("holes"), "circle", { cx, cy, r: hole, class: "hole" });
}
// Drills of the square pads
for (const [cx, cy, r] of [[578, 748.7, 11], [804.7, 489.3, 11], [1091, 489.3, 11], [707.7, 575.7, 9]])
  el(byId("holes"), "circle", { cx, cy, r, class: "hole" });

const STEP = 21.6, LEFT = 56, BOTTOM = 31;
function draw() {
  const svg = byId("canvas"), grid = byId("grid");
  const w = svg.clientWidth, h = svg.clientHeight;
  const ox = 146, oy = h - 157, floor = h - BOTTOM;
  let minor = "", major = "", ticks = "";
  grid.replaceChildren();
  for (let n = -4; ox + n * STEP < w - 2; n++) {
    const x = Math.round(ox + n * STEP), line = `M${x + .5} 2V${floor - 2}`;
    if (n % 10 === 0) major += line; else minor += line;
    ticks += `M${x} ${floor + 2}v${n % 5 ? 4 : 9}`;
    if (n % 5 === 0) el(grid, "text", { x, y: floor + 23, "text-anchor": "middle", class: "label" }, n);
  }
  for (let n = -5; oy - n * STEP > 0; n++) {
    const y = Math.round(oy - n * STEP), line = `M${LEFT + 2} ${y - .5}H${w - 3}`;
    if (n % 10 === 0) major += line; else minor += line;
    ticks += n % 5 ? `M50 ${y}h4` : `M45 ${y}h9`;
    if (n % 5 === 0) el(grid, "text", { x: 40, y: y + 3, "text-anchor": "end", class: "label" }, n);
  }
  el(grid, "path", { d: minor, class: "minor" });
  el(grid, "path", { d: major, class: "major" });
  el(grid, "path", { d: ticks, class: "ticks" });
  el(grid, "path", { d: `M${LEFT - 1} 1H${w - 2}V${floor + 1}H${LEFT - 1}z`, class: "frame" });
  el(grid, "path", { d: `M${ox} 2V${floor - 1}M${LEFT + 2} ${oy}H${w - 3}`, class: "origin" });
  byId("board").setAttribute("transform", `translate(-346 ${h - 1008})`);
}
draw();
addEventListener("resize", draw);
```
